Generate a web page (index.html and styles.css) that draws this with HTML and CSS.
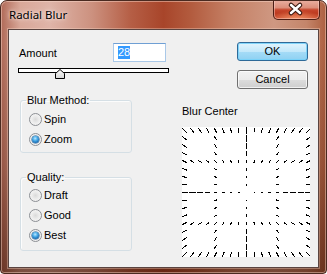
FILE: index.html
```html
<!DOCTYPE html>
<html>
<head>
<meta charset="utf-8">
<title>Radial Blur</title>
<link rel="stylesheet" href="styles.css">
</head>
<body>
<div class="window">
  <div class="titlebar">
    <span class="title">Radial Blur</span>
    <button class="close" aria-label="Close">
      <svg width="47" height="19" viewBox="0 0 47 19">
        <path d="M19 5 L28 13 M28 5 L19 13" stroke="#3a1a12" stroke-width="4.6" stroke-linecap="round" fill="none"/>
        <path d="M19 5 L28 13 M28 5 L19 13" stroke="#ffffff" stroke-width="2.4" stroke-linecap="round" fill="none"/>
      </svg>
    </button>
  </div>
  <div class="client">
    <div class="col-left">
      <div class="amount-row">
        <span class="label">Amount</span>
        <div class="field"><span class="sel">28</span></div>
      </div>
      <div class="slider">
        <div class="track"></div>
        <svg class="thumb" style="left:28%" width="10" height="10" viewBox="0 0 10 10">
          <defs>
            <linearGradient id="tg" x1="0" y1="0" x2="0" y2="1">
              <stop offset="0" stop-color="#fbfbfb"/>
              <stop offset="1" stop-color="#d6d6d6"/>
            </linearGradient>
          </defs>
          <path d="M5 0.5 L9.5 4.5 L9.5 9.5 L0.5 9.5 L0.5 4.5 Z" fill="url(#tg)" stroke="#000" stroke-width="1"/>
        </svg>
      </div>
      <fieldset class="group group-method">
        <legend>Blur Method:</legend>
        <div class="radio-row"><span class="radio"></span>Spin</div>
        <div class="radio-row"><span class="radio checked"></span>Zoom</div>
      </fieldset>
      <fieldset class="group group-quality">
        <legend>Quality:</legend>
        <div class="radio-row"><span class="radio"></span>Draft</div>
        <div class="radio-row"><span class="radio"></span>Good</div>
        <div class="radio-row"><span class="radio checked"></span>Best</div>
      </fieldset>
    </div>
    <div class="col-right">
      <button class="btn btn-default">OK</button>
      <button class="btn btn-cancel">Cancel</button>
      <div class="center-label">Blur Center</div>
      <svg id="blur-grid" class="blur-grid" width="128" height="130" viewBox="0 0 128 130"></svg>
    </div>
  </div>
</div>
<script src="script.js"></script>
</body>
</html>
```

FILE: styles.css
```css
html, body {
  margin: 0;
  padding: 0;
  background: #ffffff;
}

.window {
  width: 327px;
  height: 274px;
  box-sizing: border-box;
  border: 1px solid #4a2a20;
  border-radius: 7px 7px 4px 4px;
  display: flex;
  flex-direction: column;
  overflow: hidden;
  background:
    linear-gradient(to bottom, rgba(70, 20, 5, 0) 0%, rgba(70, 20, 5, 0) 15%, rgba(70, 20, 5, 0.25) 60%, rgba(60, 18, 4, 0.6) 100%),
    linear-gradient(90deg, #b06a58 0%, #d9a899 6%, #dfb4a8 15%, #cc917f 28%, #b55e45 40%, #a8452a 50%, #b25a3d 58%, #c47f64 70%, #cf9882 84%, #c4856a 94%, #ad6040 100%);
  box-shadow: inset 0 0 0 1px rgba(255, 225, 210, 0.45);
  font-family: "Liberation Sans", Arial, sans-serif;
  font-size: 11px;
  color: #000;
}

.titlebar {
  height: 28px;
  flex: none;
  display: flex;
  align-items: flex-start;
}

.title {
  margin: 6px 0 0 8px;
  font-family: "Noto Sans", "Open Sans", sans-serif;
  font-size: 11.5px;
  line-height: 15px;
  color: #000;
  text-shadow: 0 0 6px rgba(255, 240, 235, 0.9), 0 0 3px rgba(255, 240, 235, 0.8);
}

.close {
  margin: -1px 6px 0 auto;
  width: 47px;
  height: 20px;
  padding: 0;
  box-sizing: border-box;
  border: 1px solid #4c1f16;
  border-top: none;
  border-radius: 0 0 5px 5px;
  background:
    radial-gradient(ellipse 60% 45% at 50% 100%, rgba(255, 170, 120, 0.75), rgba(255, 170, 120, 0) 100%),
    linear-gradient(to bottom, #eab0a2 0%, #dc8f7b 40%, #c6462c 52%, #bd3a20 70%, #c94a2e 100%);
  box-shadow: inset 0 0 0 1px rgba(255, 220, 210, 0.45);
  display: flex;
  align-items: center;
  justify-content: center;
}

.close svg {
  display: block;
  margin-left: -2px;
}

.client {
  flex: 1;
  margin: 0 7px 5px 7px;
  border: 1px solid #5a4440;
  background: #f0f0f0;
  box-shadow: 0 0 0 1px rgba(255, 225, 210, 0.35);
  padding: 12px 8px 0 9px;
  display: flex;
  gap: 13px;
}

.col-left {
  width: 151px;
  display: flex;
  flex-direction: column;
}

.amount-row {
  margin-top: 1px;
  height: 19px;
  display: flex;
  align-items: center;
  justify-content: space-between;
}

.label {
  padding-left: 1px;
}

.field {
  width: 53px;
  height: 19px;
  margin-right: 3px;
  box-sizing: border-box;
  border: 1px solid #a9c8e8;
  border-top-color: #6f9fd4;
  background: #fff;
  padding: 2px 0 0 4px;
  line-height: 13px;
}

.sel {
  display: inline-block;
  background: #3399ff;
  color: #fff;
  line-height: 13px;
}

.slider {
  position: relative;
  margin-top: 6px;
  height: 11px;
}

.track {
  height: 5px;
  box-sizing: border-box;
  border: 1px solid #000;
  background: #fff;
}

.thumb {
  position: absolute;
  top: 1px;
  transform: translateX(-50%);
  display: block;
}

.group {
  margin: 15px 0 0 2px;
  width: 112px;
  box-sizing: border-box;
  border: 1px solid #d5dfe5;
  border-radius: 3px;
  box-shadow: inset 1px 1px 0 #fcfcfc;
  padding: 3px 0 3px 8px;
  min-width: 0;
}

.group legend {
  padding: 0 1px;
  margin-left: -3px;
  line-height: 12px;
}

.group-quality {
  margin-top: 18px;
  padding-top: 2px;
  padding-bottom: 5px;
}

.radio-row {
  height: 20px;
  display: flex;
  align-items: center;
}

.radio {
  width: 13px;
  height: 13px;
  box-sizing: border-box;
  border-radius: 50%;
  border: 1px solid #8c8f94;
  background: radial-gradient(circle at 50% 50%, #dadada 0%, #ececec 45%, #fafafa 100%);
  margin-right: 2px;
  display: flex;
  align-items: center;
  justify-content: center;
  flex: none;
}

.radio.checked::after {
  content: "";
  width: 7px;
  height: 7px;
  border-radius: 50%;
  background: radial-gradient(circle at 45% 35%, #bfe8ff 0%, #4fb0ea 35%, #1b70b8 70%, #0e4a85 100%);
  box-shadow: 0 0 0 0.5px #1a5a92;
}

.col-right {
  width: 128px;
  display: flex;
  flex-direction: column;
  align-items: flex-start;
}

.btn {
  align-self: flex-end;
  margin-right: 2px;
  width: 71px;
  height: 19px;
  box-sizing: border-box;
  padding: 0;
  border: 1px solid #707070;
  border-radius: 3px;
  background: linear-gradient(to bottom, #f2f2f2 0%, #ebebeb 50%, #dddddd 50%, #cfcfcf 100%);
  box-shadow: inset 0 0 0 1px rgba(255, 255, 255, 0.7);
  font-family: "Liberation Sans", Arial, sans-serif;
  font-size: 11px;
  color: #000;
  line-height: 15px;
}

.btn-default {
  border-color: #2f6a98;
  background: linear-gradient(to bottom, #e2f4fd 0%, #c3e8fa 50%, #a6dcf7 50%, #8fd1f2 100%);
  box-shadow: inset 0 0 0 1px rgba(120, 210, 250, 0.9);
}

.btn-cancel {
  margin-top: 9px;
}

.center-label {
  margin-top: 16px;
  line-height: 13px;
}

.blur-grid {
  display: block;
  margin-top: 9px;
  background: #ffffff;
}

.blur-grid line {
  stroke: #000;
  stroke-width: 1;
  shape-rendering: crispEdges;
}
```

FILE: script.js
```js
(function () {
  var svg = document.getElementById('blur-grid');
  var ns = 'http://www.w3.org/2000/svg';
  var cx = 64, cy = 65;
  var offs = [-62, -31, 0, 31, 62];
  var seen = {};
  function add(x, y) {
    var key = Math.round(x) + ',' + Math.round(y);
    if (seen[key]) return;
    seen[key] = true;
    var dx = x - cx, dy = y - cy;
    var d = Math.sqrt(dx * dx + dy * dy);
    if (d < 3) return;
    var onAxis = Math.abs(dx) < 0.5 || Math.abs(dy) < 0.5;
    var len = onAxis ? Math.max(1.5, d * 0.12) : Math.max(3, d * 0.07);
    var ux = dx / d, uy = dy / d;
    var l = document.createElementNS(ns, 'line');
    l.setAttribute('x1', (x - ux * len / 2 + 0.5).toFixed(1));
    l.setAttribute('y1', (y - uy * len / 2 + 0.5).toFixed(1));
    l.setAttribute('x2', (x + ux * len / 2 + 0.5).toFixed(1));
    l.setAttribute('y2', (y + uy * len / 2 + 0.5).toFixed(1));
    svg.appendChild(l);
  }
  offs.forEach(function (L) {
    for (var i = 0; i <= 16; i++) {
      var t = -62 + i * 7.75;
      add(cx + t, cy + L);
      add(cx + L, cy + t);
    }
  });
})();
```
